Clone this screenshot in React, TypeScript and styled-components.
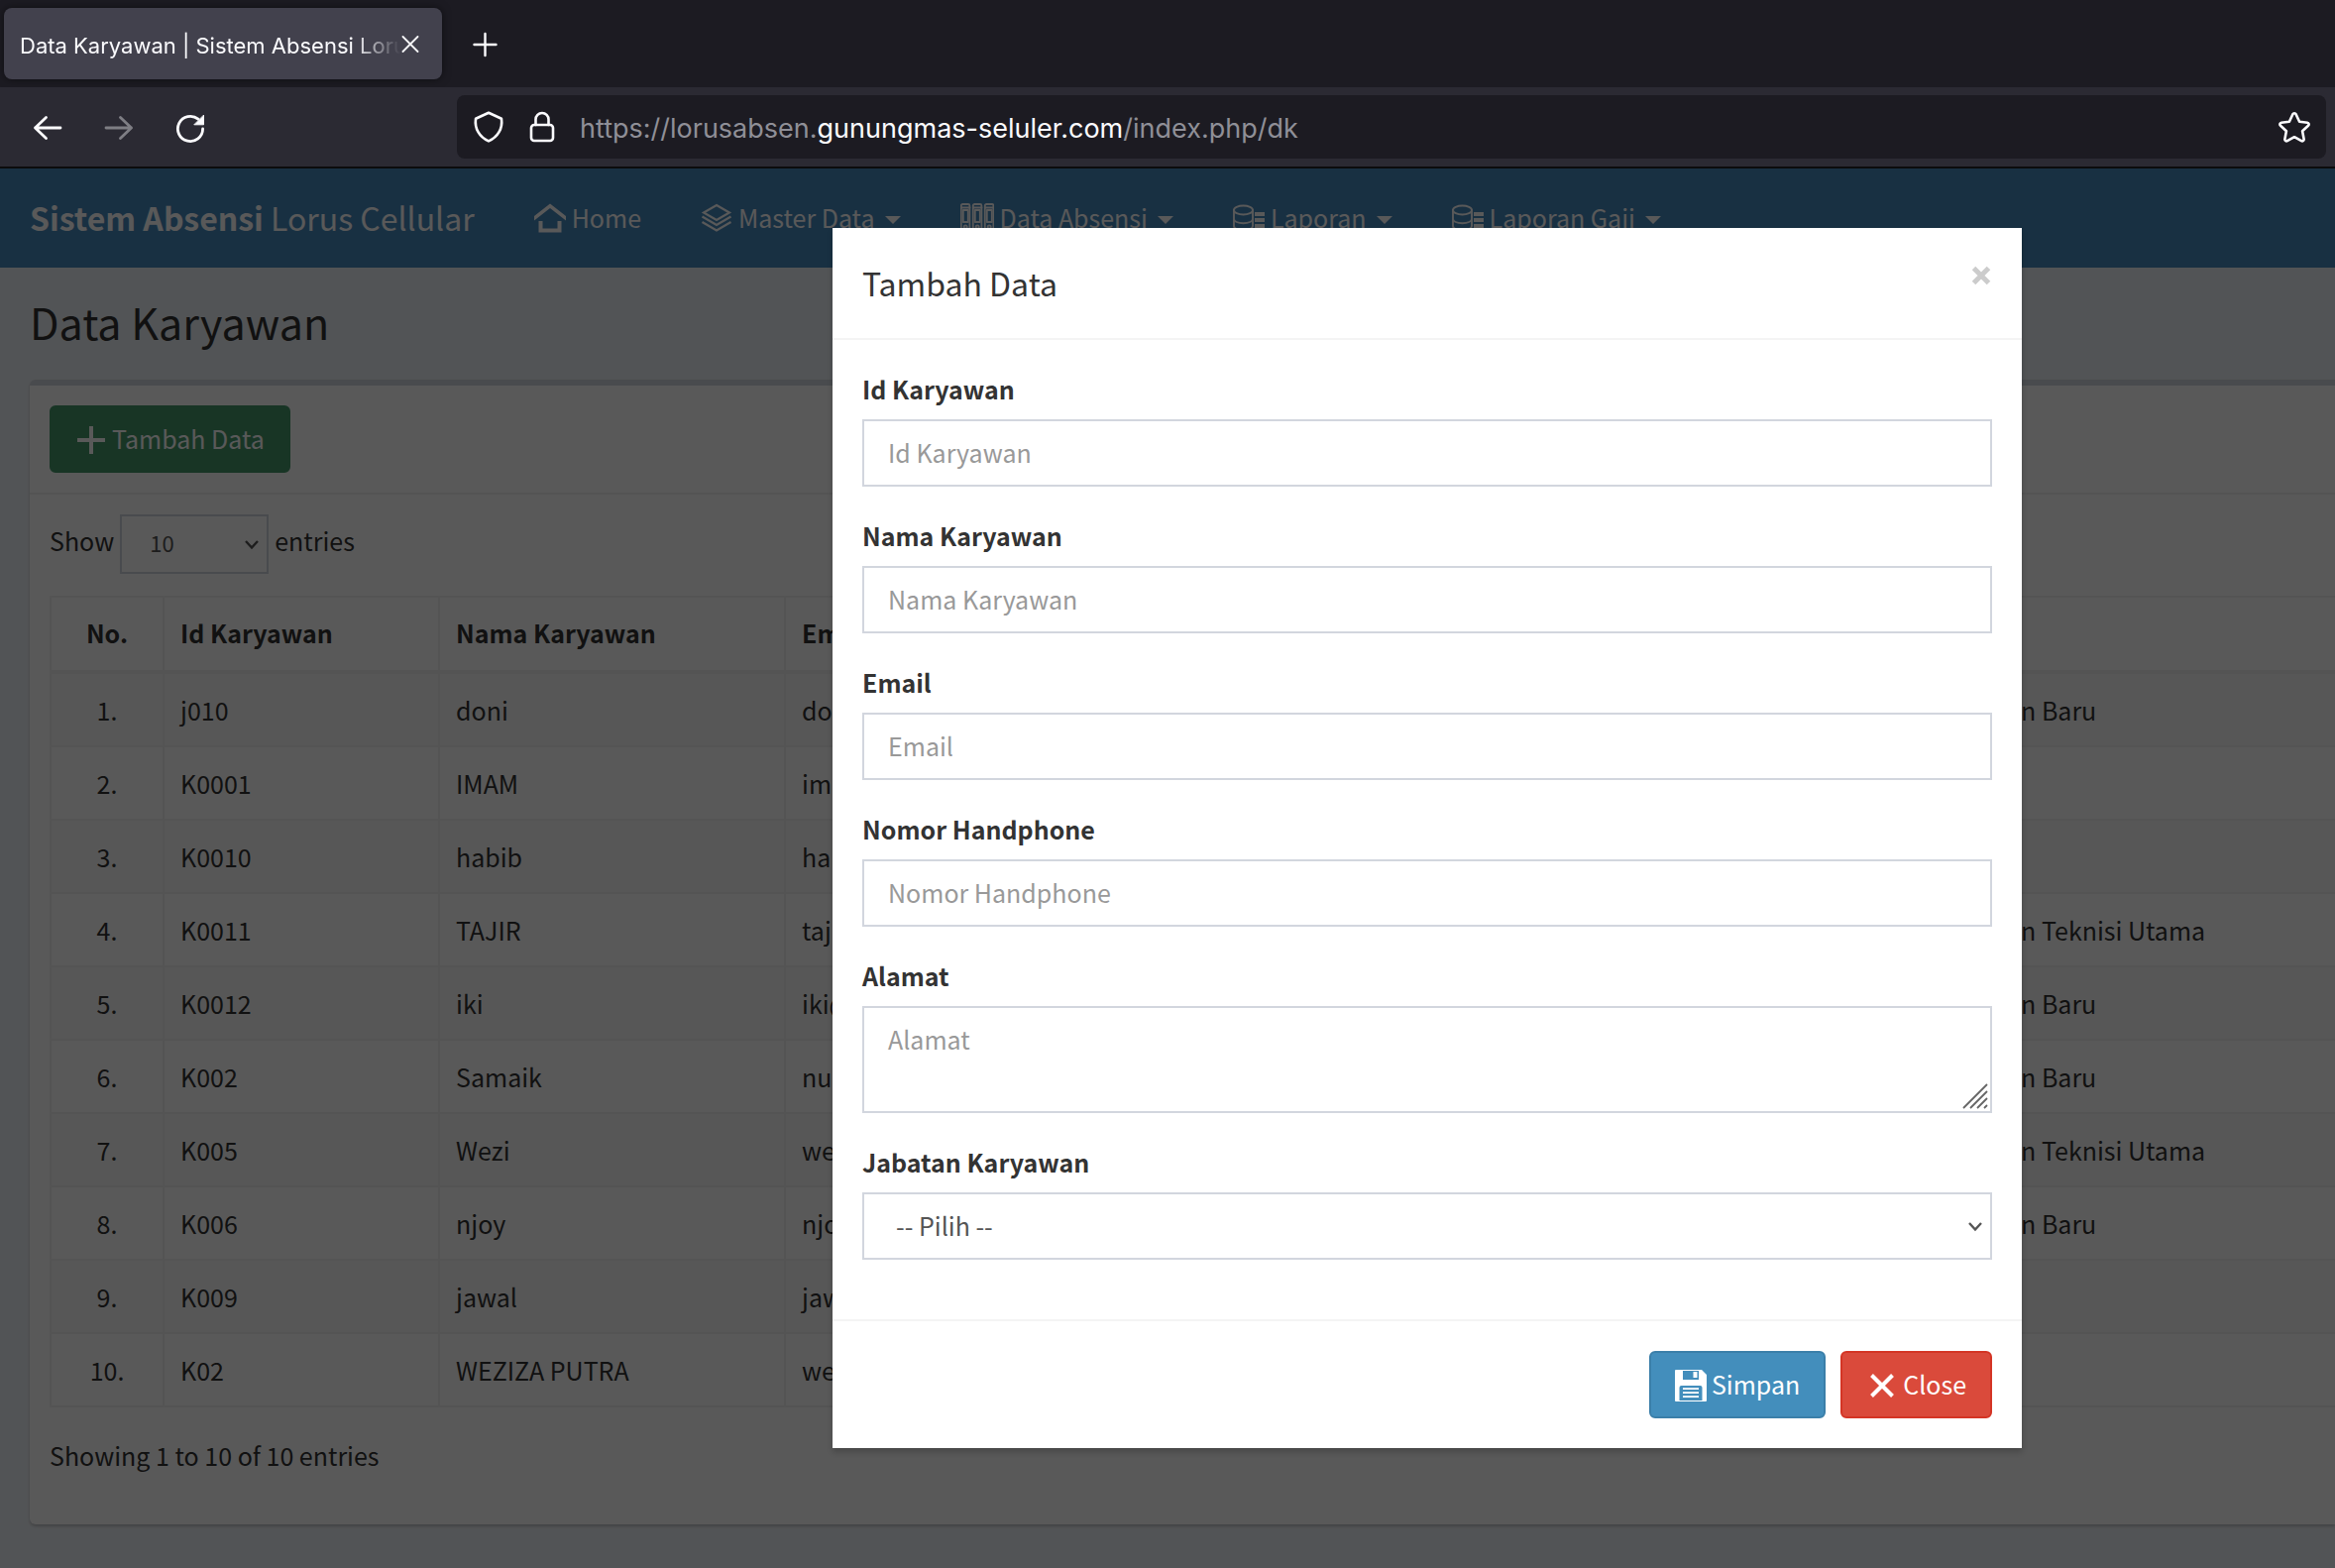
import React from "react";
import styled, { createGlobalStyle } from "styled-components";

const sans = `"Source Sans Pro", "Noto Sans CJK SC", "Noto Sans", sans-serif`;
const chrome = `Inter, "Liberation Sans", sans-serif`;

const GlobalStyle = createGlobalStyle`
  *, *::before, *::after { box-sizing: border-box; }
  html, body { margin: 0; padding: 0; }
  body { background: #1c1b22; overflow: hidden; }
  button, input, select, textarea { font: inherit; margin: 0; }
`;

/* ---------- browser chrome ---------- */

const Window = styled.div`
  display: flex;
  flex-direction: column;
  min-height: 100vh;
`;

const TabBar = styled.div`
  display: flex;
  align-items: center;
  height: 88px;
  padding: 0 4px;
  gap: 20px;
  background: #1c1b22;
  font-family: ${chrome};
`;

const Tab = styled.div`
  display: flex;
  align-items: center;
  width: 442px;
  height: 72px;
  padding: 4px 22px 0 16px;
  border-radius: 8px;
  background: #42414d;
  box-shadow: 0 0 8px rgba(0, 0, 0, 0.5);
  color: #fbfbfe;
`;

const TabTitle = styled.span`
  flex: 1;
  overflow: hidden;
  white-space: nowrap;
  font-size: 22px;
  font-weight: 400;
  line-height: 32px;
  mask-image: linear-gradient(to left, transparent, #000 48px);
`;

const ChromeButton = styled.button<{ $size: number; $dim?: boolean }>`
  display: flex;
  align-items: center;
  justify-content: center;
  flex: none;
  width: ${(p) => p.$size}px;
  height: ${(p) => p.$size}px;
  padding: 0;
  border: 0;
  background: none;
  color: #fbfbfe;
  opacity: ${(p) => (p.$dim ? 0.4 : 1)};
`;

const Toolbar = styled.div`
  display: flex;
  align-items: center;
  height: 82px;
  padding: 0 9px 0 32px;
  border-bottom: 2px solid #0c0c0d;
  background: #2b2a33;
  font-family: ${chrome};
`;

const NavButtons = styled.div`
  display: flex;
  gap: 40px;
  width: 429px;
`;

const UrlBar = styled.div`
  display: flex;
  align-items: center;
  flex: 1;
  height: 64px;
  padding: 0 16px;
  gap: 22px;
  border-radius: 8px;
  background: #1c1b22;
  color: #fbfbfe;
`;

const Url = styled.span`
  flex: 1;
  padding-top: 3px;
  font-size: 27px;
  line-height: 36px;
  color: #8f8f97;
  white-space: nowrap;

  b {
    font-weight: 400;
    color: #fbfbfe;
  }
`;

/* ---------- page ---------- */

const Page = styled.div`
  position: relative;
  flex: 1;
  overflow: hidden;
  background: #ecf0f5;
  color: #333;
  font-family: ${sans};
  font-size: 25px;
  line-height: 40px;
`;

const Navbar = styled.nav`
  display: flex;
  align-items: center;
  height: 100px;
  padding: 0 30px 2px;
  gap: 60px;
  background: #4789be;
  color: #fff;
`;

const Brand = styled.a`
  font-size: 32px;
  font-weight: 400;
  color: inherit;
  text-decoration: none;
  white-space: nowrap;

  b {
    font-weight: 700;
  }
`;

const NavLink = styled.a`
  display: flex;
  align-items: center;
  gap: 6px;
  color: inherit;
  text-decoration: none;
  white-space: nowrap;

  svg {
    margin-top: 2px;
  }
`;

const Caret = styled.span`
  margin: 6px 0 0 4px;
  border-top: 8px solid currentColor;
  border-left: 8px solid transparent;
  border-right: 8px solid transparent;
`;

const Content = styled.main`
  padding: 30px 0 43px 30px;
`;

const PageTitle = styled.h1`
  margin: 0 0 35px;
  font-size: 43px;
  font-weight: 400;
  line-height: 48px;
`;

const Box = styled.section`
  border-top: 6px solid #d2d6de;
  border-radius: 6px 0 0 6px;
  background: #fff;
  box-shadow: 0 2px 3px rgba(0, 0, 0, 0.2);
`;

const BoxHeader = styled.div`
  padding: 20px;
  border-bottom: 2px solid #f1f1f1;
`;

const BoxBody = styled.div`
  padding: 20px 0 50px 20px;
`;

const tones = {
  green: ["#45976c", "#45976c"],
  blue: ["#438ebc", "#3b7fa9"],
  red: ["#da4a3b", "#d43525"],
};

const Button = styled.button<{ $tone: keyof typeof tones }>`
  display: inline-flex;
  align-items: center;
  gap: 5px;
  height: 68px;
  padding: 0 24px 2px;
  border: 2px solid ${(p) => tones[p.$tone][1]};
  border-radius: 6px;
  background: ${(p) => tones[p.$tone][0]};
  color: #fff;
  white-space: nowrap;

  svg {
    margin-top: 4px;
  }
`;

const LengthLabel = styled.label`
  display: flex;
  align-items: flex-start;
  gap: 6px;
  margin-bottom: 22px;
  line-height: 52px;
`;

const SelectWrap = styled.span<{ $width?: string }>`
  position: relative;
  display: block;
  width: ${(p) => p.$width || "100%"};
  color: #555;

  svg {
    position: absolute;
    right: 9px;
    top: 50%;
    margin-top: -8px;
    pointer-events: none;
  }
`;

const LengthSelect = styled.select`
  display: block;
  width: 100%;
  height: 60px;
  padding: 0 28px 4px;
  border: 2px solid #d2d6de;
  border-radius: 0;
  background: #fff;
  color: #555;
  font-size: 22px;
  appearance: none;
`;

const Table = styled.table`
  width: 100%;
  table-layout: fixed;
  border-collapse: separate;
  border-spacing: 0;
  border-top: 2px solid #f1f1f1;

  th,
  td {
    padding: 16px;
    border-left: 2px solid #f1f1f1;
    border-bottom: 2px solid #f1f1f1;
    text-align: left;
    font-weight: 400;
    white-space: nowrap;
  }
  th {
    padding: 15px 16px 18px;
    border-bottom-width: 4px;
    font-weight: 700;
  }
  th:first-child,
  td:first-child {
    text-align: center;
  }
  tbody tr:nth-child(odd) {
    background: #f9f9f9;
  }
`;

const Info = styled.p`
  margin: 28px 0 0;
`;

/* ---------- modal ---------- */

const Backdrop = styled.div`
  position: absolute;
  inset: 0;
  display: flex;
  align-items: flex-start;
  justify-content: flex-end;
  padding: 60px 316px 60px 0;
  background: rgba(0, 0, 0, 0.65);
`;

const Dialog = styled.form`
  width: 1200px;
  background: #fff;
  box-shadow: 0 4px 6px rgba(0, 0, 0, 0.2);
`;

const DialogHeader = styled.header`
  display: flex;
  align-items: flex-start;
  justify-content: space-between;
  padding: 30px;
  border-bottom: 2px solid #f4f4f4;
`;

const DialogTitle = styled.h4`
  margin: 0;
  font-size: 32px;
  font-weight: 400;
  line-height: 51px;
`;

const CloseIcon = styled.button`
  display: flex;
  margin-top: 8px;
  padding: 0;
  border: 0;
  background: none;
  color: #ccc;
`;

const DialogBody = styled.div`
  display: grid;
  gap: 30px;
  padding: 30px 30px 60px;
`;

const Field = styled.div`
  display: grid;
  gap: 12px;
`;

const FieldLabel = styled.label`
  font-weight: 700;
  line-height: 38px;
`;

const controlBase = `
  display: block;
  width: 100%;
  height: 68px;
  padding: 12px 24px 14px;
  border: 2px solid #d2d6de;
  border-radius: 0;
  background: #fff;
  color: #555;
  outline: 0;
  appearance: none;
  &::placeholder { color: #999; opacity: 1; }
`;

const Input = styled.input`
  ${controlBase}
`;

const TextareaWrap = styled.div`
  position: relative;

  svg {
    position: absolute;
    right: 4px;
    bottom: 4px;
    pointer-events: none;
  }
`;

const Textarea = styled.textarea`
  ${controlBase}
  height: 108px;
  padding-top: 11px;
  resize: none;
`;

const Select = styled.select`
  ${controlBase}
  padding: 0 32px 2px;
`;

const DialogFooter = styled.footer`
  display: flex;
  justify-content: flex-end;
  gap: 15px;
  padding: 30px;
  border-top: 2px solid #f4f4f4;
`;

/* ---------- icons ---------- */

type IconProps = { size?: number; children: React.ReactNode; stroke?: number; box?: number };

const Glyph = styled.svg`
  flex: none;
`;

const Icon = ({ size = 32, box = 32, stroke = 0, children }: IconProps) => (
  <Glyph
    width={size}
    height={size}
    viewBox={`0 0 ${box} ${box}`}
    fill={stroke ? "none" : "currentColor"}
    stroke={stroke ? "currentColor" : "none"}
    strokeWidth={stroke}
    strokeLinecap="round"
    strokeLinejoin="round"
    aria-hidden="true"
  >
    {children}
  </Glyph>
);

const HomeIcon = () => (
  <Icon>
    <path d="M16 1.5 32 14v4.600L16 6 0 18.600V14z" />
    <path d="M4.500 19h4v7.600h15V19h4v11.500h-23z" />
  </Icon>
);

const LayersIcon = () => (
  <Icon stroke={2.2}>
    <g strokeLinecap="butt" strokeLinejoin="miter">
      <path d="M16 3 29 10.500 16 18 3 10.500z" />
      <path d="M1.500 14.500 16 23l14.500-8.500M1.500 20 16 28.500 30.500 20" />
    </g>
  </Icon>
);

const BindersIcon = () => (
  <Icon size={34} box={34} stroke={1.8}>
    {[1, 13, 25].map((x) => (
      <g key={x}>
        <rect x={x - 0.2} y="3" width="8.6" height="28" rx="1.5" />
        <path d={`M${x} 6.5h8.500M${x + 1.8} 9h5v12h-5z`} />
        <circle cx={x + 4.2} cy="26" r="1.6" />
      </g>
    ))}
  </Icon>
);

const DatabaseIcon = () => (
  <Icon>
    <g fill="none" stroke="currentColor" strokeWidth="1.9">
      <ellipse cx="10.5" cy="8" rx="9.5" ry="4.5" />
      <path d="M1 8v16c0 2.400 4 4.200 9.500 4.200S20 26.400 20 24V8M1 17c0 2.400 4 4.200 9.500 4.200S20 19.400 20 17" />
    </g>
    <path d="M22 10h10v4H22zM22 16h10v4H22zM22 22h10v4H22z" />
  </Icon>
);

const PlusIcon = () => (
  <Icon>
    <path d="M14 2h4v12h12v4H18v12h-4V18H2v-4h12z" />
  </Icon>
);

const SaveIcon = () => (
  <Icon>
    <path
      fillRule="evenodd"
      d="M0 1a1 1 0 0 1 1-1h26l5 5v26a1 1 0 0 1-1 1H1a1 1 0 0 1-1-1zM8 1v9h16V1zM6.500 16A2 2 0 0 0 4.500 18v13h23V18a2 2 0 0 0-2-2z"
    />
    <path d="M18.500 2h4v6h-4zM8 18.200h16v1.800H8zM8 22.200h16V24H8zM8 26.200h16V28H8z" />
  </Icon>
);

const TimesIcon = () => (
  <Icon stroke={4}>
    <path strokeLinecap="butt" d="M5.500 5.500 26.500 26.500M26.500 5.500 5.500 26.500" />
  </Icon>
);

const ChevronIcon = () => (
  <Icon size={16} box={16} stroke={2.4}>
    <path strokeLinecap="butt" strokeLinejoin="miter" d="M2 5l6 6.500L14 5" />
  </Icon>
);

/* ---------- data ---------- */

type Employee = [string, string, string, string, string, string];

const employees: Employee[] = [
  ["j010", "doni", "doni", "", "", "Karyawan Baru"],
  ["K0001", "IMAM", "imam", "", "", ""],
  ["K0010", "habib", "habib", "", "", ""],
  ["K0011", "TAJIR", "tajir", "", "", "Karyawan Teknisi Utama"],
  ["K0012", "iki", "iki@", "", "", "Karyawan Baru"],
  ["K002", "Samaik", "nu", "", "", "Karyawan Baru"],
  ["K005", "Wezi", "wezi", "", "", "Karyawan Teknisi Utama"],
  ["K006", "njoy", "njoy", "", "", "Karyawan Baru"],
  ["K009", "jawal", "jawal", "", "", ""],
  ["K02", "WEZIZA PUTRA", "we", "", "", ""],
];

const columns: [string, number | undefined][] = [
  ["No.", 114],
  ["Id Karyawan", 278],
  ["Nama Karyawan", 349],
  ["Email", 380],
  ["Nomor Handphone", 330],
  ["Alamat", 419],
  ["Jabatan", undefined],
];

const menus: [string, React.FC][] = [
  ["Master Data", LayersIcon],
  ["Data Absensi", BindersIcon],
  ["Laporan", DatabaseIcon],
  ["Laporan Gaji", DatabaseIcon],
];

const textFields: [string, string][] = [
  ["id", "Id Karyawan"],
  ["nama", "Nama Karyawan"],
  ["email", "Email"],
  ["hp", "Nomor Handphone"],
];

const BrowserChrome = () => (
  <>
    <TabBar>
      <Tab>
        <TabTitle>Data Karyawan | Sistem Absensi Lorus Cellular</TabTitle>
        <ChromeButton $size={20} aria-label="Close tab">
          <Icon size={20} box={20} stroke={1.8}>
            <path d="M2.500 1l15 15M17.500 1l-15 15" />
          </Icon>
        </ChromeButton>
      </Tab>
      <ChromeButton $size={48} aria-label="New tab">
        <Icon size={28} box={28} stroke={2.4}>
          <path d="M13.500 4v22M2.500 15h22" />
        </Icon>
      </ChromeButton>
    </TabBar>
    <Toolbar>
      <NavButtons>
        <ChromeButton $size={32} aria-label="Back">
          <Icon stroke={2.8}>
            <path d="M29 17H3.500M14.500 6.500 3.500 17l11 10.500" />
          </Icon>
        </ChromeButton>
        <ChromeButton $size={32} $dim aria-label="Forward">
          <Icon stroke={2.8}>
            <path d="M3 17h25.500M17.500 6.500l11 10.500-11 10.500" />
          </Icon>
        </ChromeButton>
        <ChromeButton $size={32} aria-label="Reload">
          <Icon stroke={2.8}>
            <path d="M28.600 18A12.600 12.600 0 1 1 24 8.200" />
            <path fill="currentColor" strokeWidth="1" d="M29.500 4.500v9.300h-9.300z" />
          </Icon>
        </ChromeButton>
      </NavButtons>
      <UrlBar>
        <Icon stroke={2.6}>
          <path d="M16 1.800 29 7.800c1.300 9.700-3.500 18.500-13 22.600C6.500 26.300 1.700 17.500 3 7.800z" />
        </Icon>
        <Icon stroke={2.6}>
          <rect x="5" y="14" width="22" height="16" rx="3" />
          <path d="M9.500 14V8.500a6.500 6.500 0 0 1 13 0V14" />
        </Icon>
        <Url>
          https://lorusabsen.<b>gunungmas-seluler.com</b>/index.php/dk
        </Url>
        <Icon stroke={2.6}>
          <path d="M14.400 3.200a1.800 1.800 0 0 1 3.200 0l3.500 7.500 8 1a1.700 1.700 0 0 1 .9 3l-5.900 5.500 1.500 8.100a1.700 1.700 0 0 1-2.500 1.800L16 26.200l-7.100 3.900a1.700 1.700 0 0 1-2.500-1.800l1.500-8.100L2 14.700a1.700 1.700 0 0 1 .9-3l8-1z" />
        </Icon>
      </UrlBar>
    </Toolbar>
  </>
);

const EmployeePage = () => (
  <>
    <Navbar>
      <Brand href="#">
        <b>Sistem Absensi</b> Lorus Cellular
      </Brand>
      <NavLink href="#">
        <HomeIcon />
        Home
      </NavLink>
      {menus.map(([label, MenuIcon]) => (
        <NavLink href="#" key={label}>
          <MenuIcon />
          {label}
          <Caret />
        </NavLink>
      ))}
    </Navbar>
    <Content>
      <PageTitle>Data Karyawan</PageTitle>
      <Box>
        <BoxHeader>
          <Button type="button" $tone="green">
            <PlusIcon />
            Tambah Data
          </Button>
        </BoxHeader>
        <BoxBody>
          <LengthLabel>
            Show
            <SelectWrap $width="150px">
              <LengthSelect defaultValue="10">
                <option>10</option>
                <option>25</option>
              </LengthSelect>
              <ChevronIcon />
            </SelectWrap>
            entries
          </LengthLabel>
          <Table>
            <colgroup>
              {columns.map(([name, width]) => (
                <col key={name} width={width} />
              ))}
            </colgroup>
            <thead>
              <tr>
                {columns.map(([name]) => (
                  <th key={name}>{name}</th>
                ))}
              </tr>
            </thead>
            <tbody>
              {employees.map((cells, i) => (
                <tr key={cells[0]}>
                  <td>{i + 1}.</td>
                  {cells.map((cell, j) => (
                    <td key={j}>{cell}</td>
                  ))}
                </tr>
              ))}
            </tbody>
          </Table>
          <Info>Showing 1 to 10 of 10 entries</Info>
        </BoxBody>
      </Box>
    </Content>
  </>
);

const AddDialog = () => (
  <Backdrop>
    <Dialog role="dialog" aria-labelledby="dialog-title">
      <DialogHeader>
        <DialogTitle id="dialog-title">Tambah Data</DialogTitle>
        <CloseIcon type="button" aria-label="Close dialog">
          <Icon size={20} box={20} stroke={5}>
            <path strokeLinecap="butt" d="M1.500 2.500l15 15M16.500 2.500l-15 15" />
          </Icon>
        </CloseIcon>
      </DialogHeader>
      <DialogBody>
        {textFields.map(([id, label]) => (
          <Field key={id}>
            <FieldLabel htmlFor={id}>{label}</FieldLabel>
            <Input id={id} placeholder={label} />
          </Field>
        ))}
        <Field>
          <FieldLabel htmlFor="alamat">Alamat</FieldLabel>
          <TextareaWrap>
            <Textarea id="alamat" placeholder="Alamat" />
            <svg width="26" height="26" viewBox="0 0 26 26" stroke="#666" strokeWidth="1.8" aria-hidden="true">
              <path d="M1 25 25 1M8 25 25 8M15 25l10-10M22 25l3-3" />
            </svg>
          </TextareaWrap>
        </Field>
        <Field>
          <FieldLabel htmlFor="jabatan">Jabatan Karyawan</FieldLabel>
          <SelectWrap>
            <Select id="jabatan">
              <option>-- Pilih --</option>
            </Select>
            <ChevronIcon />
          </SelectWrap>
        </Field>
      </DialogBody>
      <DialogFooter>
        <Button type="button" $tone="blue">
          <SaveIcon />
          Simpan
        </Button>
        <Button type="button" $tone="red">
          <TimesIcon />
          Close
        </Button>
      </DialogFooter>
    </Dialog>
  </Backdrop>
);

const App = () => (
  <Window>
    <GlobalStyle />
    <BrowserChrome />
    <Page>
      <EmployeePage />
      <AddDialog />
    </Page>
  </Window>
);

export default App;
